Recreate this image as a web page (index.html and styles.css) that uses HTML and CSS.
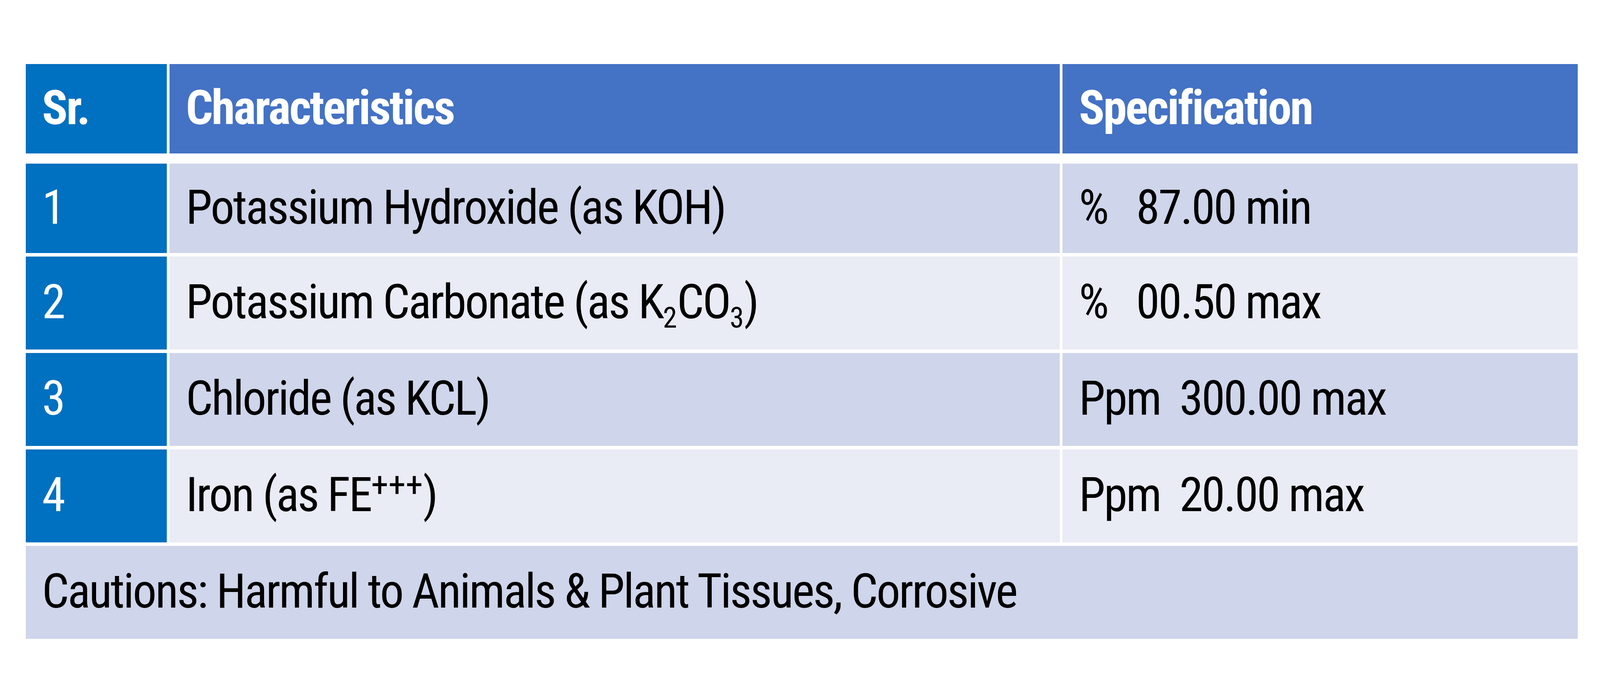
FILE: index.html
```html
<!DOCTYPE html>
<html lang="en">
<head>
<meta charset="utf-8">
<title>Potassium Hydroxide Specification</title>
<link rel="stylesheet" href="styles.css">
</head>
<body>
<div class="spec-table">
  <div class="row head">
    <div class="cell sr"><span>Sr.</span></div>
    <div class="cell"><span>Characteristics</span></div>
    <div class="cell"><span>Specification</span></div>
  </div>
  <div class="row odd">
    <div class="cell sr"><span>1</span></div>
    <div class="cell"><span>Potassium Hydroxide (as KOH)</span></div>
    <div class="cell spec"><span>%   87.00 min</span></div>
  </div>
  <div class="row even">
    <div class="cell sr"><span>2</span></div>
    <div class="cell"><span>Potassium Carbonate (as K<sub>2</sub>CO<sub>3</sub>)</span></div>
    <div class="cell spec"><span>%   00.50 max</span></div>
  </div>
  <div class="row odd">
    <div class="cell sr"><span>3</span></div>
    <div class="cell"><span>Chloride (as KCL)</span></div>
    <div class="cell spec"><span>Ppm  300.00 max</span></div>
  </div>
  <div class="row even">
    <div class="cell sr"><span>4</span></div>
    <div class="cell"><span>Iron (as FE<sup>+++</sup>)</span></div>
    <div class="cell spec"><span>Ppm  20.00 max</span></div>
  </div>
  <div class="row caution odd">
    <div class="cell"><span>Cautions: Harmful to Animals &amp; Plant Tissues, Corrosive</span></div>
  </div>
</div>
</body>
</html>
```

FILE: styles.css
```css
html, body {
  margin: 0;
  padding: 0;
  background: #ffffff;
}

body {
  font-family: Roboto, "DejaVu Sans", sans-serif;
  font-stretch: condensed;
  font-size: 122px;
  letter-spacing: -0.03em;
  color: #000000;
}

.spec-table {
  display: flex;
  flex-direction: column;
  gap: 9px;
  width: 97.015vw;
  margin: 164px 0 0 1.6vw;
}

.row {
  display: grid;
  grid-template-columns: 491fr 3095fr 1791fr;
  column-gap: 0.162vw;
  height: 238px;
}

.row.head {
  height: 229px;
  margin-bottom: 17px;
}

.row.head + .row {
  height: 229px;
}

.cell {
  display: flex;
  align-items: center;
  padding-left: 1.025vw;
  padding-bottom: 4px;
  white-space: pre;
  line-height: 1;
  min-width: 0;
}

.head .cell {
  background: #4472c4;
  color: #ffffff;
  font-weight: 700;
}

.odd .cell {
  background: #cfd5ea;
}

.even .cell {
  background: #e9ebf5;
}

.row .cell.sr {
  background: #0070c0;
  color: #ffffff;
}

.caution {
  grid-template-columns: 1fr;
}

sub, sup {
  line-height: 0;
  letter-spacing: 0;
}

sub {
  font-size: 0.6em;
  vertical-align: -0.33em;
}

sup {
  font-size: 0.73em;
  vertical-align: 0.43em;
}
```
